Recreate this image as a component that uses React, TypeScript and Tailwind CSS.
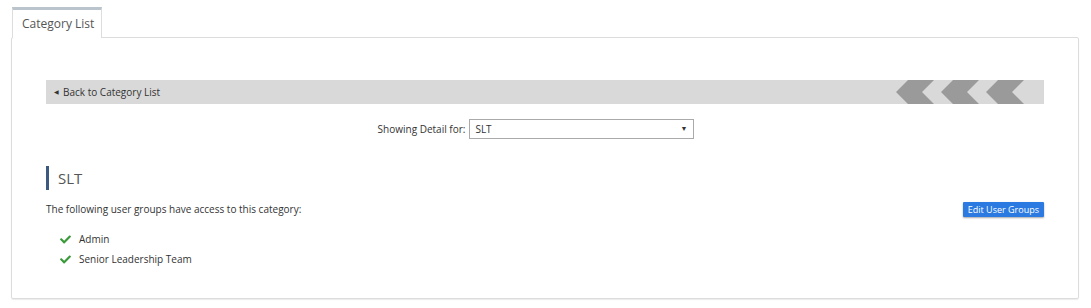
import { FaCheck } from 'react-icons/fa';

function Chevron() {
  return (
    <svg width="38" height="24" viewBox="0 0 38 24" className="block">
      <polygon points="12,0 38,0 26,12 38,24 12,24 0,12" fill="#9a9a9a" />
    </svg>
  );
}

export default function App() {
  const grupos = ['Admin', 'Senior Leadership Team'];

  return (
    <div className="w-[1091px] h-[308px] bg-white pt-[7px] pl-[11px]" style={{ fontFamily: '"Open Sans", sans-serif' }}>
      {/* Pestaña */}
      <div className="flex">
        <div className="ml-[1px] w-[90px] h-[31px] border-t-[3px] border-[#b9c4cc] border-x border-x-[#dddddd] bg-white text-[12px] text-[#555] pl-[9px] pt-[5px] relative z-10">
          Category List
        </div>
      </div>

      {/* Panel */}
      <div className="-mt-[1px] w-[1068px] h-[262px] border border-[#dcdcdc] rounded-[2px] shadow-[0_1px_1px_rgba(0,0,0,0.08)] px-[34px] pt-[42px]">
        {/* Barra volver */}
        <div className="h-[24px] bg-[#d9d9d9] flex items-center justify-between">
          <div className="flex items-center pl-[8px] text-[10px] text-[#333]">
            <span className="text-[6px] mr-[4px] leading-none">◀</span>
            Back to Category List
          </div>
          <div className="flex gap-[7px] pr-[20px]">
            <Chevron />
            <Chevron />
            <Chevron />
          </div>
        </div>

        {/* Selector */}
        <div className="flex justify-center items-center mt-[15px] pr-[18px] text-[10px] text-[#333]">
          <span className="mr-[4px]">Showing Detail for:</span>
          <div className="w-[225px] h-[20px] border border-[#aaaaaa] flex items-center justify-between pl-[5px] pr-[6px] bg-white">
            <span>SLT</span>
            <span className="text-[7px]">▼</span>
          </div>
        </div>

        {/* Título */}
        <div className="mt-[27px] flex items-center">
          <div className="w-[3px] h-[24px] bg-[#3c5a80]" />
          <span className="ml-[9px] text-[15px] text-[#555] leading-none">SLT</span>
        </div>

        <div className="mt-[12px] flex items-center justify-between">
          <p className="text-[10px] text-[#333]">The following user groups have access to this category:</p>
          <button className="h-[15px] px-[5px] bg-[#2a7ae2] text-white text-[9px] leading-none rounded-[1px] shadow-[0_1px_2px_rgba(0,0,0,0.35)]">
            Edit User Groups
          </button>
        </div>

        <ul className="mt-[15px] pl-[13px] flex flex-col gap-[5px]">
          {grupos.map((g) => (
            <li key={g} className="flex items-center text-[10px] text-[#333] h-[15px]">
              <FaCheck className="w-[13px] h-[11px] text-[#3a9a3a]" />
              <span className="ml-[7px]">{g}</span>
            </li>
          ))}
        </ul>
      </div>
    </div>
  );
}
